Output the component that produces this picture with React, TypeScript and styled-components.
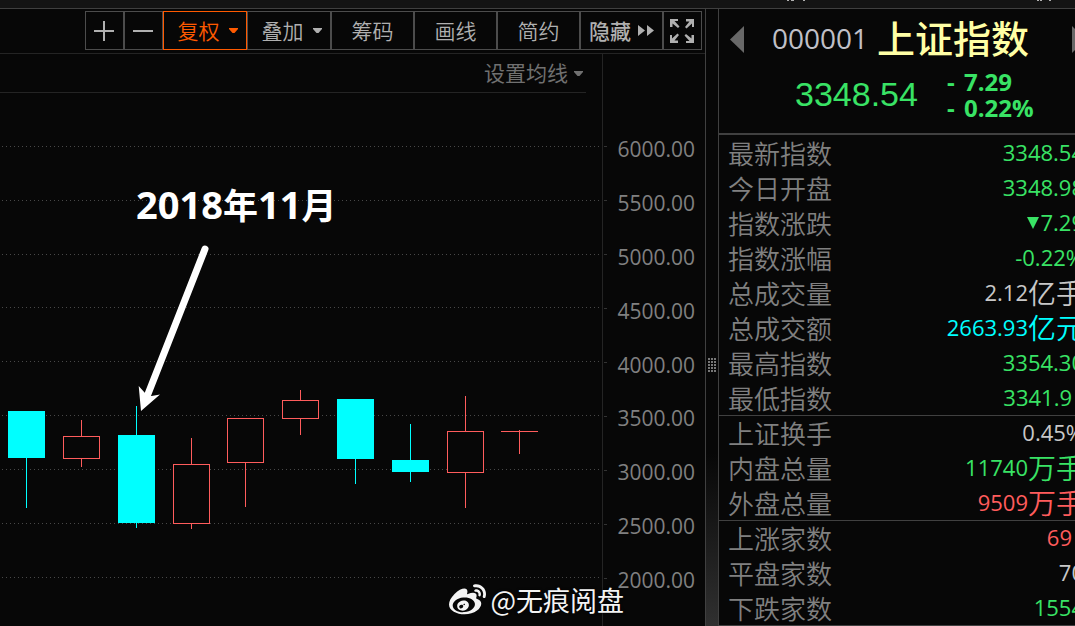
import React from "react";
import styled, { createGlobalStyle } from "styled-components";
import { FaWeibo } from "react-icons/fa";

const color = {
  bg: "#070707",
  line: "#404040",
  faint: "#242424",
  text: "#b0b0b0",
  label: "#808080",
  green: "#39e365",
  red: "#ff5c5c",
  cyan: "#00ffff",
  white: "#c8c8c8",
  orange: "#ff5a00",
};

const Global = createGlobalStyle`
  *, *::before, *::after { box-sizing: border-box; }
  body {
    margin: 0;
    background: ${color.bg};
    color: ${color.text};
    font-family: "Open Sans", "Noto Sans CJK SC", sans-serif;
  }
  button { font: inherit; color: inherit; background: none; padding: 0; cursor: pointer; }
`;

const Page = styled.div`
  display: flex;
  flex-direction: column;
  height: 100vh;
  overflow: hidden;
`;

const TopStrip = styled.div`
  flex: none;
  display: flex;
  justify-content: flex-end;
  height: 9px;
  background: #141414;
  border-bottom: 1px solid ${color.line};
`;

const Main = styled.div`
  flex: 1;
  min-height: 0;
  display: grid;
  grid-template-columns: minmax(0, 1fr) 12px 357px;
  grid-template-rows: minmax(0, 1fr);
`;

const ChartPanel = styled.section`
  display: flex;
  flex-direction: column;
  min-height: 0;
  overflow: hidden;
  border-right: 1px solid ${color.line};
`;

const Toolbar = styled.div`
  flex: none;
  display: flex;
  justify-content: flex-end;
  height: 45px;
  padding: 2px 3px 0 0;
  border-bottom: 1px solid ${color.faint};
`;

const ToolButton = styled.button<{ $w: number; $active?: boolean; $strong?: boolean }>`
  display: flex;
  align-items: center;
  justify-content: center;
  gap: ${(p) => (p.$strong ? 7 : 9)}px;
  width: ${(p) => p.$w}px;
  height: 39px;
  border: 1px solid ${(p) => (p.$active ? color.orange : "#4c4c4c")};
  color: ${(p) => (p.$active ? color.orange : color.text)};
  font-size: 21px;
  font-weight: ${(p) => (p.$strong ? 500 : 350)};
  line-height: 36px;
`;

const MenuToolButton = styled(ToolButton)`
  padding-left: 5px;
`;

const IconToolButton = styled(ToolButton)`
  padding-right: 1px;
`;

const ChartBody = styled.div`
  flex: 1;
  min-height: 0;
  display: grid;
  grid-template-columns: minmax(0, 1fr) 103px;
  grid-template-rows: minmax(0, 1fr);
`;

const Plot = styled.div`
  position: relative;
  display: flex;
  flex-direction: column;
  min-height: 0;
`;

const AverageBar = styled.div`
  flex: none;
  display: flex;
  justify-content: flex-end;
  height: 39px;
  margin-right: 16px;
  border-bottom: 1px solid ${color.faint};
`;

const AverageButton = styled.button`
  display: flex;
  align-items: center;
  gap: 6px;
  padding-right: 3px;
  border: 0;
  color: #707070;
  font-size: 21px;
  line-height: 36px;
`;

const Candles = styled.svg`
  flex: 1;
  display: block;
  width: 100%;
  min-height: 0;
`;

const Note = styled.p`
  position: absolute;
  left: 136px;
  top: 123px;
  margin: 0;
  color: #fff;
  font-size: 35px;
  font-weight: 700;
  line-height: 54px;
  white-space: nowrap;
`;

const NoteNumber = styled.span`
  font-size: 38px;
`;

const Watermark = styled.div`
  position: absolute;
  right: -22px;
  bottom: 6px;
  z-index: 1;
  display: flex;
  align-items: center;
  gap: 4px;
  color: #f4f4f4;
  font-family: "Noto Sans CJK SC", sans-serif;
  font-size: 27px;
  line-height: 40px;
  white-space: nowrap;
  text-shadow: 0 0 3px #000;
`;

const Axis = styled.ol`
  display: grid;
  grid-template-rows: repeat(10, 1fr);
  height: 607px;
  margin: 0;
  padding: 68px 10px 0 1px;
  border-left: 1px solid ${color.faint};
  list-style: none;
`;

const AxisItem = styled.li`
  display: flex;
  align-items: center;
  justify-content: space-between;
  color: ${color.label};
  font-size: 21px;
  line-height: 28px;

  &::before {
    content: "";
    width: 3px;
    height: 1px;
    margin-bottom: 4px;
    background: #333;
  }
`;

const Splitter = styled.div`
  display: flex;
  align-items: center;
  justify-content: center;
  background: linear-gradient(#070707 72%, #303030);
`;

const Sidebar = styled.aside`
  min-width: 0;
  overflow: hidden;
  border-left: 1px solid ${color.line};
`;

const Quote = styled.header`
  height: 126px;
  border-bottom: 2px solid ${color.line};
`;

const QuoteTitle = styled.div`
  display: flex;
  align-items: center;
  width: 372px;
  height: 60px;
  padding: 0 5px 0 11px;
`;

const Pager = styled.button`
  display: flex;
  border: 0;
`;

const Code = styled.span`
  margin-left: 28px;
  padding-bottom: 2px;
  color: #c0c0c8;
  font-size: 28px;
  line-height: 54px;
`;

const Name = styled.h1`
  flex: 1;
  margin: 0 0 0 9px;
  padding-bottom: 2px;
  color: #ffffa5;
  font-size: 38px;
  font-weight: 500;
  line-height: 54px;
`;

const QuotePrice = styled.div`
  display: flex;
  align-items: center;
  gap: 29px;
  padding-left: 76px;
  color: ${color.green};
`;

const Price = styled.strong`
  padding-bottom: 2px;
  font-family: "Liberation Sans", sans-serif;
  font-size: 34px;
  font-weight: 400;
  line-height: 50px;
`;

const Change = styled.div`
  font-size: 24px;
  font-weight: 700;
  line-height: 26px;
`;

const ChangeRow = styled.div`
  display: grid;
  grid-template-columns: 17px auto;
`;

const Stats = styled.table`
  width: calc(100% + 9px);
  border-collapse: separate;
  border-spacing: 0;
  border-bottom: 1px solid ${color.line};
`;

const StatRow = styled.tr<{ $ruled?: boolean }>`
  height: 35px;

  th, td {
    padding: 0;
    border-top: ${(p) => (p.$ruled ? `1px solid ${color.line}` : "0")};
    line-height: 32px;
    white-space: nowrap;
  }
`;

const StatLabel = styled.th`
  && { padding: 2px 0 0 9px; }
  color: ${color.label};
  font-size: 26px;
  font-weight: 350;
  text-align: left;
`;

const StatValue = styled.td<{ $tone: string; $inset?: boolean }>`
  && { padding: 0 ${(p) => (p.$inset ? 12 : 0)}px 2px 0; }
  color: ${(p) => p.$tone};
  font-size: 22px;
  text-align: right;
`;

const Unit = styled.span`
  font-size: 28px;
  font-weight: 350;
  line-height: 24px;
  vertical-align: -3px;
`;

const Caret = () => (
  <svg width="9" height="5" viewBox="0 0 9 5" aria-hidden="true">
    <path d="M0 0H9V1L5.5 5H3.5L0 1Z" fill="currentColor" />
  </svg>
);

const Expand = () => (
  <svg width="24" height="24" viewBox="0 0 24 24" aria-hidden="true" fill="currentColor">
    {[0, 90, 180, 270].map((a) => (
      <path
        key={a}
        transform={`rotate(${a} 12 12)`}
        d="M0 0H8V2H4.500L9.500 7.500L8 9L2.500 4.500V8H0Z"
      />
    ))}
  </svg>
);

type Candle = { x: number; top: number; bottom: number; high: number; low: number; down?: boolean };

const candles: Candle[] = [
  { x: 8, top: 411, bottom: 458, high: 411, low: 508, down: true },
  { x: 63, top: 436, bottom: 459, high: 420, low: 467 },
  { x: 118, top: 435, bottom: 523, high: 406, low: 528, down: true },
  { x: 173, top: 464, bottom: 524, high: 438, low: 529 },
  { x: 227, top: 418, bottom: 463, high: 418, low: 507 },
  { x: 282, top: 400, bottom: 419, high: 390, low: 435 },
  { x: 337, top: 399, bottom: 459, high: 399, low: 484, down: true },
  { x: 392, top: 460, bottom: 472, high: 424, low: 482, down: true },
  { x: 447, top: 431, bottom: 473, high: 396, low: 508 },
  { x: 501, top: 431, bottom: 432, high: 430, low: 454 },
];

const gridLines = [146, 200, 254, 307, 361, 415, 469, 523, 577];

const prices = ["6000.00", "5500.00", "5000.00", "4500.00", "4000.00", "3500.00", "3000.00", "2500.00", "2000.00", "1500.00"];

type Stat = {
  label: string;
  value: string;
  unit?: string;
  tone: string;
  falling?: boolean;
  ruled?: boolean;
  inset?: boolean;
};

const stats: Stat[] = [
  { label: "最新指数", value: "3348.54", tone: color.green },
  { label: "今日开盘", value: "3348.98", tone: color.green },
  { label: "指数涨跌", value: "7.29", tone: color.green, falling: true },
  { label: "指数涨幅", value: "-0.22%", tone: color.green },
  { label: "总成交量", value: "2.12", unit: "亿手", tone: color.white },
  { label: "总成交额", value: "2663.93", unit: "亿元", tone: color.cyan },
  { label: "最高指数", value: "3354.30", tone: color.green },
  { label: "最低指数", value: "3341.9", tone: color.green, inset: true },
  { label: "上证换手", value: "0.45%", tone: color.white, ruled: true },
  { label: "内盘总量", value: "11740", unit: "万手", tone: color.green },
  { label: "外盘总量", value: "9509", unit: "万手", tone: color.red },
  { label: "上涨家数", value: "69", tone: color.red, inset: true, ruled: true },
  { label: "平盘家数", value: "70", tone: color.white },
  { label: "下跌家数", value: "1554", tone: color.green },
];

const CandleShape = ({ x, top, bottom, high, low, down }: Candle) => {
  const tone = down ? color.cyan : color.red;
  return (
    <g>
      <rect x={x + 18} y={high} width="1" height={low - high} fill={tone} />
      <rect x={x} y={top} width="37" height={bottom - top} fill={tone} />
      {!down && bottom - top > 2 && (
        <rect x={x + 1} y={top + 1} width="35" height={bottom - top - 2} fill={color.bg} />
      )}
    </g>
  );
};

export default function App() {
  return (
    <Page>
      <Global />
      <TopStrip>
        <svg width="288" height="8" aria-hidden="true" fill="#b0b0b0">
          <path d="M0 0h2v1h-2zM4 0h3v1h-3zM16 0h2v1h-2zM250 0h2v1h-2zM253 0h2v1h-2zM262 0h2v1h-2z" />
        </svg>
      </TopStrip>
      <Main>
        <ChartPanel>
          <Toolbar>
            <IconToolButton $w={39} aria-label="放大">
              <svg width="20" height="20" aria-hidden="true" stroke="currentColor" strokeWidth="2">
                <path d="M0 10H20M10 0V20" />
              </svg>
            </IconToolButton>
            <IconToolButton $w={39} aria-label="缩小">
              <svg width="20" height="20" aria-hidden="true" stroke="currentColor" strokeWidth="2">
                <path d="M0 10H20" />
              </svg>
            </IconToolButton>
            <MenuToolButton $w={84} $active>复权<Caret /></MenuToolButton>
            <MenuToolButton $w={84}>叠加<Caret /></MenuToolButton>
            <ToolButton $w={83}>筹码</ToolButton>
            <ToolButton $w={83}>画线</ToolButton>
            <ToolButton $w={83}>简约</ToolButton>
            <ToolButton $w={83} $strong>
              隐藏
              <svg width="16" height="11" aria-hidden="true" fill="currentColor">
                <path d="M0 0L7 5.500L0 11ZM9 0L16 5.500L9 11Z" />
              </svg>
            </ToolButton>
            <IconToolButton $w={39} aria-label="全屏"><Expand /></IconToolButton>
          </Toolbar>
          <ChartBody>
            <Plot>
              <AverageBar>
                <AverageButton>设置均线<Caret /></AverageButton>
              </AverageBar>
              <Candles role="img" aria-label="上证指数K线图">
                <g transform="translate(0 -93)">
                  {gridLines.map((y) => (
                    <line key={y} x1="2" x2="100%" y1={y + 0.5} y2={y + 0.5} stroke="#484848" strokeDasharray="1 3" />
                  ))}
                  {candles.map((c) => <CandleShape key={c.x} {...c} />)}
                  <path d="M205 249L148 394" stroke="#fff" strokeWidth="7" strokeLinecap="round" />
                  <path d="M141 411L138.700 386L145 393L151.500 396L160 394.500Z" fill="#fff" />
                </g>
              </Candles>
              <Note>
                <NoteNumber>2018</NoteNumber>年<NoteNumber>11</NoteNumber>月
              </Note>
              <Watermark>
                <FaWeibo size={37} aria-hidden="true" />
                @无痕阅盘
              </Watermark>
            </Plot>
            <Axis>
              {prices.map((p) => <AxisItem key={p}>{p}</AxisItem>)}
            </Axis>
          </ChartBody>
        </ChartPanel>
        <Splitter>
          <svg width="8" height="110" viewBox="0 0 8 110" aria-hidden="true" fill="#777">
            {[0, 1, 2, 3, 4].map((r) =>
              [0, 1, 2].map((c) => <rect key={`${r}-${c}`} x={c * 3} y={95 + r * 3} width="2" height="2" />)
            )}
          </svg>
        </Splitter>
        <Sidebar>
          <Quote>
            <QuoteTitle>
              <Pager aria-label="上一个">
                <svg width="14" height="27" aria-hidden="true"><path d="M14 0V27L0 13.500Z" fill="#686868" /></svg>
              </Pager>
              <Code>000001</Code>
              <Name>上证指数</Name>
              <Pager aria-label="下一个">
                <svg width="14" height="27" aria-hidden="true"><path d="M0 0V27L14 13.500Z" fill="#686868" /></svg>
              </Pager>
            </QuoteTitle>
            <QuotePrice>
              <Price>3348.54</Price>
              <Change>
                <ChangeRow><span>-</span><span>7.29</span></ChangeRow>
                <ChangeRow><span>-</span><span>0.22%</span></ChangeRow>
              </Change>
            </QuotePrice>
          </Quote>
          <Stats>
            <tbody>
              {stats.map((s) => (
                <StatRow key={s.label} $ruled={s.ruled}>
                  <StatLabel scope="row">{s.label}</StatLabel>
                  <StatValue $tone={s.tone} $inset={s.inset}>
                    {s.falling && (
                      <svg width="13" height="14" aria-hidden="true"><path d="M0 0H12L6 12Z" fill="currentColor" /></svg>
                    )}
                    {s.value}
                    {s.unit && <Unit>{s.unit}</Unit>}
                  </StatValue>
                </StatRow>
              ))}
            </tbody>
          </Stats>
        </Sidebar>
      </Main>
    </Page>
  );
}
